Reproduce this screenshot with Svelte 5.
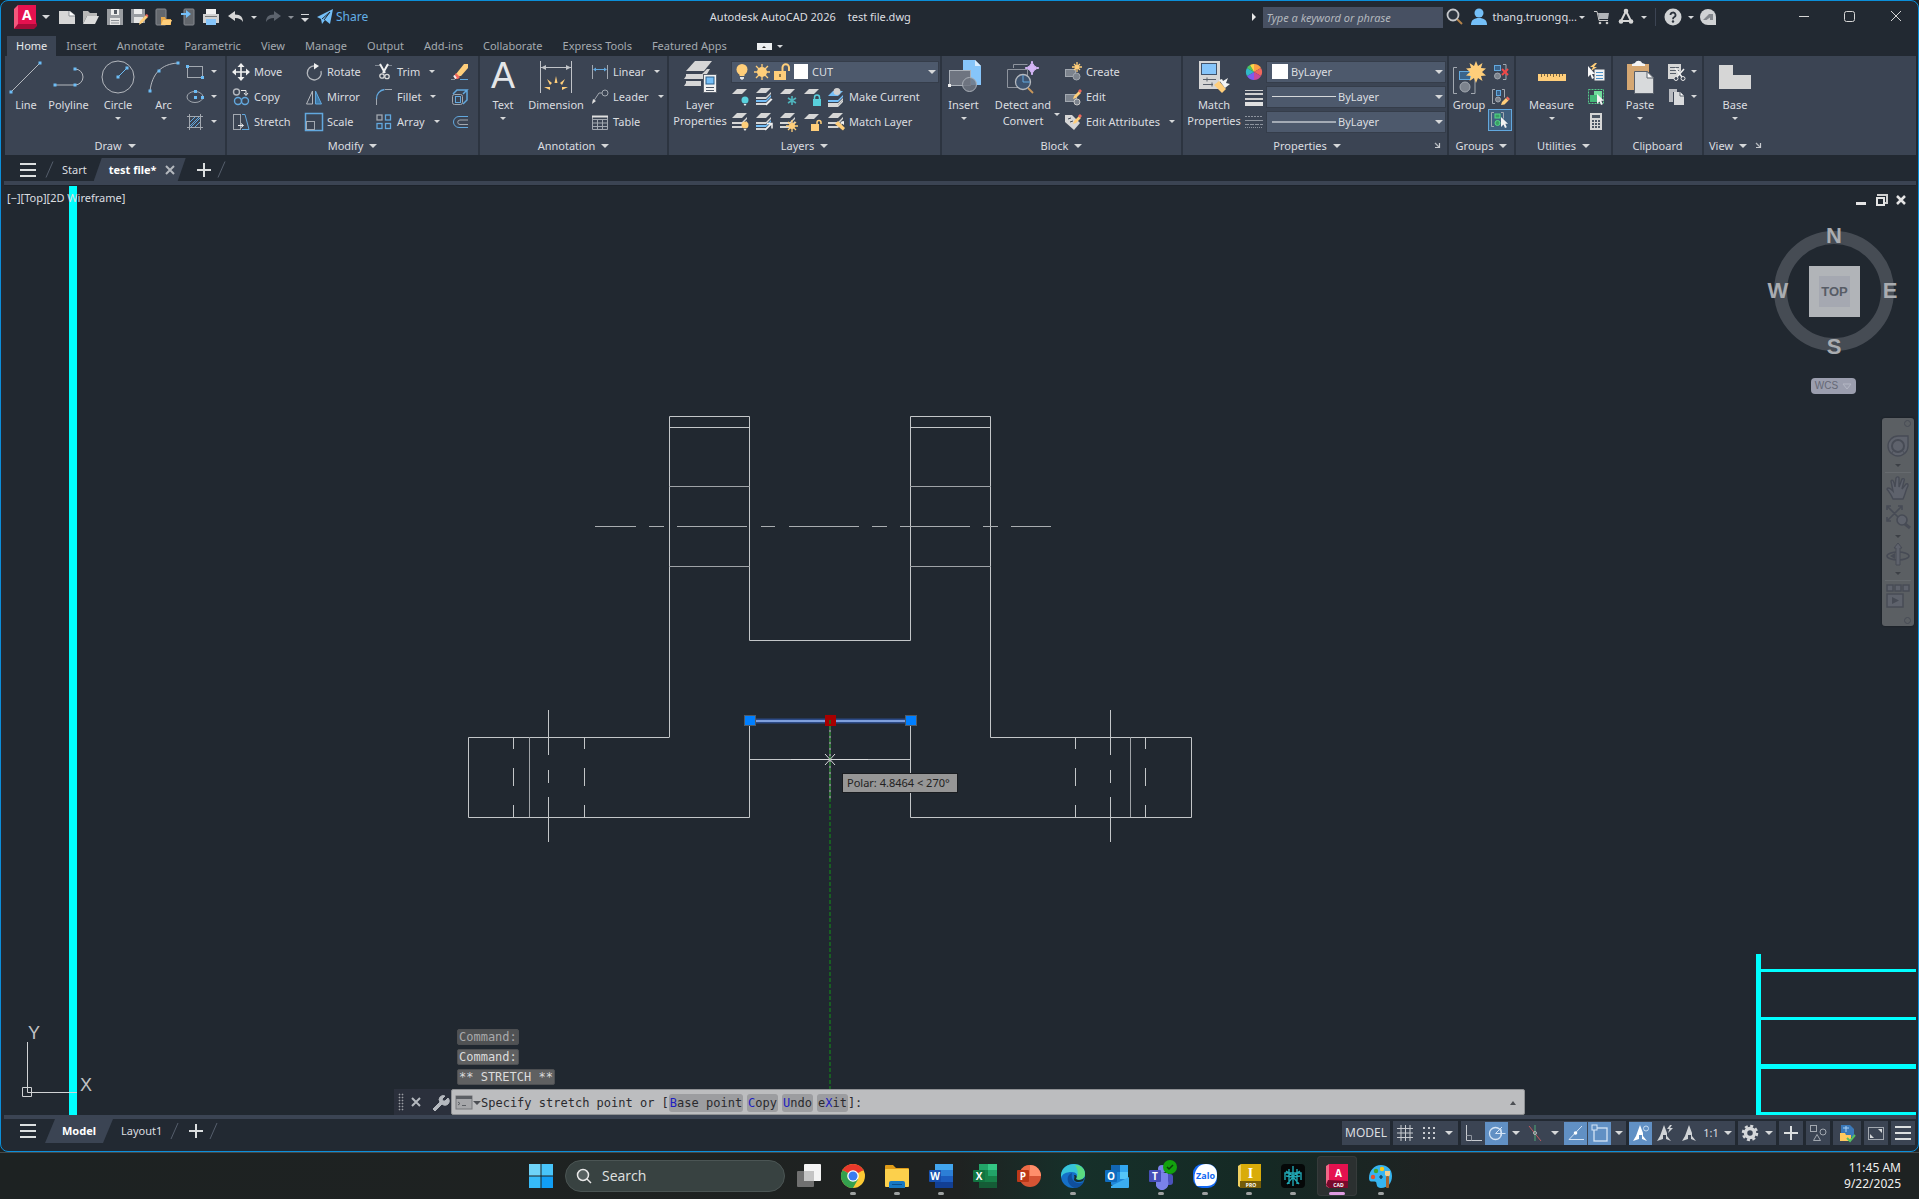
<script>
  const sheet = (y, c = '#d6d6d6') => `<path d="M6 ${y}h10l-5 5H1z" fill="${c}"/>`;
  const edge = (y, c = '#d6d6d6') => `<path d="M1 ${y}h10l5-5v2l-5 5H1z" fill="${c}"/>`;
  const pencil = '<path d="M10 8l5-5 2 2-5 5-3 1z" fill="#ffce7a"/><path d="M14 3l2-2 2 2-2 2z" fill="#f0685c"/>';
  const cursor = '<path d="M10 6v10l2.500-2.500 1.500 3.500 1.800-.8-1.500-3.400H17z" fill="#f2f2f2"/>';
  const dot = (x, y) => `<rect x="${x - 1.5}" y="${y - 1.5}" width="3" height="3" fill="#6cbcf5"/>`;
  const sun = (x, y, r, c = '#ffce7a') =>
    `<circle cx="${x}" cy="${y}" r="${r}" fill="${c}"/><path d="M${x} ${y - r - 3}v${2 * r + 6}M${x - r - 3} ${y}h${2 * r + 6}M${x - r - 1} ${y - r - 1}l${2 * r + 2} ${2 * r + 2}M${x + r + 1} ${y - r - 1}l${-2 * r - 2} ${2 * r + 2}" stroke="${c}" stroke-width="1.3"/>`;
  const star = '<path d="M25 2l2 5 4.500-3-1.500 5 5 .5-4 3.500 4 3.500-5 .5 1.500 5-4.500-3-2 5-2-5-4.500 3 1.500-5-5-.5 4-3.500-4-3.500 5-.5-1.500-5 4.500 3z" fill="#ffce7a"/>';

  const icons = {
    line: `<path d="M3 33L32 4" stroke="#b4b8be"/>${dot(3, 33)}${dot(32, 4)}`,
    polyline: `<path d="M4 26h20a8 8 0 0 0 0-16" fill="none" stroke="#b4b8be"/>${dot(4, 26)}${dot(24, 26)}${dot(24, 10)}`,
    circle: `<circle cx="18" cy="18" r="16" fill="none" stroke="#b4b8be"/><path d="M18 18l9-9" stroke="#6cbcf5"/>${dot(18, 18)}${dot(27, 9)}`,
    arc: `<path d="M4 32C6 15 15 5 32 4" fill="none" stroke="#b4b8be"/>${dot(4, 32)}${dot(13, 12)}${dot(32, 4)}`,
    rect: `<rect x="1.500" y="3.500" width="15" height="11" fill="none" stroke="#a2a8b0"/><path d="M0 2h3v3H0zM15 13h3v3h-3z" fill="#6cbcf5"/>`,
    ellipse: `<ellipse cx="9" cy="9" rx="8" ry="5.500" fill="none" stroke="#a2a8b0"/><path d="M8 8h3v3H8zM8 2h3v3H8zM15 8h3v3h-3z" fill="#6cbcf5"/>`,
    hatch: '<path d="M3.500 1v16M14.500 1v16M1 3.500h16M1 14.500h16" stroke="#a2a8b0"/><path d="M4 9l5-5M4 13l9-9M5 14l9-9M9 14l5-5" stroke="#62a8de"/>',
    move: '<path d="M9 2v14M2 9h14" stroke="#f0f0f0" stroke-width="1.600"/><path d="M9 0l3.500 4h-7zM9 18l3.500-4h-7zM0 9l4-3.500v7zM18 9l-4-3.500v7z" fill="#f0f0f0"/>',
    copy: '<circle cx="4.500" cy="4" r="3" fill="none" stroke="#b4b8be" stroke-width="1.400"/><path d="M9 2.500h5v4M12 5l2 2.500L16 5" fill="none" stroke="#e8e8e8"/><circle cx="6" cy="13" r="3.500" fill="none" stroke="#62a8de" stroke-width="1.400"/><circle cx="13" cy="13" r="3.500" fill="none" stroke="#62a8de" stroke-width="1.400"/>',
    stretch: '<rect x="1.500" y="1.500" width="7" height="15" fill="none" stroke="#a2a8b0"/><path d="M10 1.500h3l4 15h-7" fill="none" stroke="#62a8de"/><path d="M6 12.500h5M9 10.500l2.500 2-2.500 2" fill="none" stroke="#f0f0f0"/>',
    rotate: '<path d="M10 3A7 7 0 1 0 16 8" fill="none" stroke="#b4b8be" stroke-width="1.300"/><path d="M9 0l5 3-5 3.500z" fill="#f0f0f0"/>',
    mirror: '<path d="M7.500 3v13H1.500z" fill="none" stroke="#b4b8be"/><path d="M10.500 3v13h6z" fill="#3f7aa8" stroke="#62a8de"/>',
    scale: '<rect x=".5" y=".5" width="17" height="17" fill="none" stroke="#62a8de" stroke-width="1.500"/><rect x="1.500" y="8.500" width="8" height="8" fill="#3b4453" stroke="#a2a8b0"/>',
    trim: '<path d="M0 2.500h6M11 2.500h6" stroke="#7f8792"/><path d="M5 1l5 9M13 1l-5 9" stroke="#f0f0f0" stroke-width="2"/><circle cx="7" cy="13" r="2.200" fill="none" stroke="#d8d8d8" stroke-width="1.300"/><circle cx="12" cy="13.500" r="2.200" fill="none" stroke="#d8d8d8" stroke-width="1.300"/>',
    fillet: '<path d="M1.500 17v-6" stroke="#a2a8b0"/><path d="M1.500 11a9 9 0 0 1 8-9.500" fill="none" stroke="#62a8de" stroke-width="1.300"/><path d="M10 1.500h7" stroke="#a2a8b0"/>',
    array: '<g fill="none" stroke-width="1.300"><rect x="2" y="2" width="5" height="5" stroke="#a2a8b0"/><g stroke="#62a8de"><rect x="10.500" y="2" width="5" height="5"/><rect x="2" y="10.500" width="5" height="5"/><rect x="10.500" y="10.500" width="5" height="5"/></g></g>',
    erase: '<path d="M13 1h4v4l-7 8H7l-2-2z" fill="#ffce7a"/><path d="M5 10l4 4-2 2H4l-1-3z" fill="#f0685c"/><path d="M3 12.500l2 3" stroke="#f2f2f2" stroke-width="2"/><path d="M0 16.500h4" stroke="#8c939d"/><path d="M9 16.500h8" stroke="#62a8de"/>',
    explode: '<rect x="1.500" y="6.500" width="10" height="10" rx="2" fill="none" stroke="#a2a8b0"/><rect x="4.500" y="8.500" width="5" height="6" fill="none" stroke="#62a8de"/><path d="M2 6l4-4h10l-4 4M16 2v10l-4 4" fill="none" stroke="#62a8de" stroke-width="1.500"/>',
    offset: '<path d="M17 3.500H8a5.500 5.500 0 0 0 0 11h9" fill="none" stroke="#62a8de"/><path d="M17 7H9a2 2 0 0 0 0 4.500h8" fill="none" stroke="#a2a8b0"/>',
    dimension: '<path d="M2.500 2v32M33.500 2v32M3 8.500h30" stroke="#c0c3c8"/><path d="M3 8.500l5-2.500v5zM33 8.500l-5-2.500v5z" fill="#c0c3c8"/><path d="M18 17l1.500 7h-3zM9 20l5 4-2 2zM27 20l-5 4 2 2zM6 28h6v3zM30 28h-6v3z" fill="#ffce7a"/>',
    linear: '<path d="M1.500 2v14M16.500 2v14" stroke="#a2a8b0"/><path d="M3 6.500h12" stroke="#62a8de"/><path d="M2 6.500l3-2v4zM16 6.500l-3-2v4z" fill="#62a8de"/>',
    leader: '<circle cx="14" cy="5" r="3" fill="none" stroke="#a2a8b0"/><path d="M11 5H8l-6 9" fill="none" stroke="#a2a8b0"/><path d="M1 16l1-5 3 2z" fill="#e0e0e0"/>',
    table: '<path d="M1.500 3.500h15v13h-15zM1 6.500h16M1 10h16M1 13.500h16M6.500 6v10M11.500 6v10" fill="none" stroke="#a2a8b0"/><path d="M1 3.500h16" stroke="#e0e0e0" stroke-width="2"/>',
    layerprops: '<path d="M13 2h17l-8 10H4z" fill="#d6d6d6"/><path d="M4 15h16l5-5h3l-6 10H4zM4 22h15v5H4z" fill="#d6d6d6"/><path d="M4 17l-2 3h4M4 24l-2 3h4" fill="#d6d6d6"/><rect x="21.500" y="15.500" width="13" height="18" fill="#f2f2f2" stroke="#59606b"/><rect x="24" y="18" width="8" height="7" fill="#74bff8" stroke="#2b5f8a"/><path d="M24 28.500h8M24 31.500h8" stroke="#4b5563"/>',
    bulb: '<circle cx="9" cy="6.500" r="5.500" fill="#ffce7a"/><path d="M6.500 10h5v3h-5z" fill="#ffce7a"/><path d="M7 14h4v1.500L9 17l-2-1.500z" fill="#e8e8e8"/>',
    sun: sun(9, 9, 5),
    lock: '<rect x="1" y="8" width="12" height="9" fill="#ffce7a"/><path d="M9.500 8V4.500a3 3 0 0 1 6.500 0V8" fill="none" stroke="#ffce7a" stroke-width="2"/><path d="M7 11v3" stroke="#6b5b3a" stroke-width="1.500"/>',
    layoff: `${sheet(1)}<circle cx="14" cy="12" r="3.500" fill="#58d0dc"/><path d="M12.500 16h3l-1.500 2z" fill="#eee"/>`,
    layiso: `${sheet(0)}${edge(9)}${edge(12, '#74bff8')}${edge(15)}<path d="M11 17l6-6" stroke="#f0f0f0" stroke-width="1.500"/>`,
    layfrz: `${sheet(1)}<path d="M13 8v9M9 10l8 5M17 10l-8 5" stroke="#4fb4bd" stroke-width="1.600"/>`,
    laylck: `${sheet(1)}<rect x="10" y="11" width="8" height="7" fill="#58d0dc"/><path d="M11.500 11V9.500a2.500 2.500 0 0 1 5 0V11" fill="none" stroke="#58d0dc" stroke-width="1.500"/>`,
    laymcur: `${sheet(3, '#74bff8')}${edge(12, '#74bff8')}${edge(15)}${edge(17)}<circle cx="10" cy="3.500" r="3.500" fill="#d0d0d0"/>`,
    layon: `${sheet(0)}${edge(9)}${edge(13)}<circle cx="14" cy="12" r="3.500" fill="#ffce7a"/><path d="M12.500 16h3l-1.500 2z" fill="#eee"/>`,
    layuniso: `${sheet(0)}${edge(9)}${edge(12, '#74bff8')}${edge(15)}<path d="M10 17l6-6M12 10.500h5v5" stroke="#f0f0f0" stroke-width="1.500" fill="none"/>`,
    laythw: `${sheet(0)}${edge(9)}${edge(13)}${sun(13, 13, 3)}`,
    layulk: `${sheet(1)}<rect x="8" y="11" width="8" height="7" fill="#ffce7a"/><path d="M14 11V9.500a2 2 0 0 1 4 0V11" fill="none" stroke="#ffce7a" stroke-width="1.500"/>`,
    laymch: `${sheet(0)}${edge(9)}${edge(13)}<path d="M8 11l3-3 7 7-2 2.500z" fill="#ffce7a"/><path d="M13 9l4 3v-4z" fill="#f2f2f2"/>`,
    insert: '<path d="M17 1h12l6 6v19H17z" fill="#86c5fa"/><path d="M29 1v6h6" fill="#d9ecfd"/><rect x="3.500" y="11.500" width="21" height="15" fill="#6e7480" stroke="#aab0b8"/><circle cx="23.500" cy="25.500" r="7" fill="#6e7480" stroke="#aab0b8" fill-opacity=".85"/><rect x="2" y="25" width="3" height="3" fill="#eee"/>',
    detect: '<path d="M8.500 9V5.500h14M2.500 10.500h20v18h-20z" fill="none" stroke="#8e949e"/><circle cx="18" cy="23" r="7.500" fill="#3e5470" stroke="#b4b8be" stroke-width="1.300"/><path d="M18 16v7h7" fill="none" stroke="#62a8de"/><path d="M23 29l5 5" stroke="#c8975a" stroke-width="1.800"/><path d="M27 2q1 6 7 7-6 1-7 7-1-6-7-7 6-1 7-7z" fill="#d3b5f5" stroke="#d3b5f5"/>',
    create: `<rect x="1.500" y="6.500" width="10" height="7" fill="#7c838d" stroke="#a2a8b0"/><circle cx="12.500" cy="13.500" r="3.500" fill="#7c838d" stroke="#a2a8b0"/>${sun(13, 4, 2)}`,
    edit: `<rect x="1.500" y="6.500" width="11" height="7" fill="#7c838d" stroke="#a2a8b0"/><circle cx="13" cy="14" r="3" fill="#7c838d" stroke="#c8c8c8"/>${pencil}`,
    attr: `<path d="M1 2h7l8 8-6 7-9-8z" fill="#d6d6d6"/><path d="M4 6l3-1M6 9l3-1" stroke="#3b4453"/>${pencil}`,
    matchprops: '<rect x="3" y="2" width="21" height="28" fill="#d6d6d6"/><rect x="5.500" y="4.500" width="15" height="11" fill="#86c5fa" stroke="#41536b"/><path d="M7 20.500h13M7 25.500h10M11 18.500v4M16 23.500v4" stroke="#59606b"/><path d="M18 26l5-4 7 8-4 4z" fill="#ffce7a"/><path d="M23 21l3-1 1 2 5-3-2 5 4 1-5 4z" fill="#f4f4f4"/>',
    wheel: '<g transform="translate(9 9)"><path d="M0 0V-8A8 8 0 0 1 7-4z" fill="#ff9f43"/><path d="M0 0L7-4A8 8 0 0 1 7 4z" fill="#f0685c"/><path d="M0 0L7 4A8 8 0 0 1 0 8z" fill="#c8489c"/><path d="M0 0V8A8 8 0 0 1-7 4z" fill="#7c5cf0"/><path d="M0 0L-7 4A8 8 0 0 1-7-4z" fill="#30b8c8"/><path d="M0 0L-7-4A8 8 0 0 1-4-7z" fill="#4cc860"/><path d="M0 0L-4-7A8 8 0 0 1 0-8z" fill="#f8d848"/></g>',
    weights: '<path d="M0 2.500h18" stroke="#d0d0d0"/><path d="M0 6h18" stroke="#d0d0d0" stroke-width="2"/><path d="M0 11h18" stroke="#d0d0d0" stroke-width="2"/><path d="M0 16h18" stroke="#e0e0e0" stroke-width="4"/>',
    types: '<path d="M0 3.500h18" stroke="#8e949e" stroke-dasharray="2 1"/><path d="M0 7.500h18" stroke="#8e949e"/><path d="M0 11.500h18" stroke="#8e949e" stroke-dasharray="4 1"/><path d="M0 14.500h18" stroke="#8e949e" stroke-dasharray="1 1"/>',
    group: `<path d="M6 8.500H2.500v26H6M20 34.500h4v-18" fill="none" stroke="#a2a8b0"/><rect x="8.500" y="12.500" width="11" height="8" fill="#3a648c" stroke="#62a8de"/><circle cx="14" cy="28" r="5" fill="#7c838d" stroke="#a2a8b0"/>${star}`,
    ungroup: '<rect x="2.500" y="2.500" width="6" height="5" fill="#3a648c" stroke="#62a8de"/><circle cx="5.500" cy="13" r="3" fill="#7c838d" stroke="#a2a8b0"/><path d="M11 1.500h3v15h-3" fill="none" stroke="#a2a8b0"/><path d="M10 6l6 6M16 6l-6 6" stroke="#f04848" stroke-width="2"/>',
    groupedit: '<path d="M3 1.500H.5v14H3M10 1.500h2.500v8" fill="none" stroke="#a2a8b0"/><rect x="4.500" y="2.500" width="4" height="5" fill="#3a648c" stroke="#62a8de"/><circle cx="6" cy="11.500" r="2.500" fill="#7c838d" stroke="#a2a8b0"/><path d="M9 17l1-3 4-4 2.500 2.500-4 4z" fill="#ffce7a"/><path d="M14 10l1.500-1.500L18 11l-1.500 1.500z" fill="#f0685c"/>',
    groupsel: `<path d="M3 1.500H.5v14H3M10 1.500h2.500v6" fill="none" stroke="#a2a8b0"/><rect x="4" y="3" width="5" height="4" fill="#3b9e65" stroke="#55d88a"/><circle cx="6.500" cy="12" r="2.500" fill="#3b9e65" stroke="#55d88a"/>${cursor}`,
    measure: '<rect x="4" y="15" width="28" height="7" fill="#ffce7a"/><path d="M7.500 15v3M10.500 15v2M13.500 15v3M16.500 15v2M19.500 15v3M22.500 15v2M25.500 15v3M28.500 15v2" stroke="#7a6540"/>',
    qselect: '<path d="M8 0l-5 4h3l-2 4 6-4H7l3-4z" fill="#ffce7a"/><rect x="7.500" y="6.500" width="10" height="11" fill="#f0f0f0"/><path d="M9 9.500h7M9 12.500h7M9 15.500h7" stroke="#4a90c8"/><path d="M1 3v11l2.500-2.500L5 16l2-1-2-4h3z" fill="#f8f8f8"/>',
    qcalcsel: `<path d="M1.500 1.500h15v14h-15z" fill="none" stroke="#55c88a" stroke-dasharray="2 1"/><path d="M7 3h8v8H7z" fill="#6fdc9c"/><path d="M3 7h7v7H3z" fill="#45b87a"/>${cursor}`,
    calc: '<rect x="3" y="0" width="12" height="17" fill="#d6d6d6"/><rect x="5" y="2" width="8" height="3" fill="#4b5563"/><path d="M5 8h8M5 11h8M5 14h8" stroke="#4b5563" stroke-width="2" stroke-dasharray="2 1"/>',
    paste: '<path d="M5 5h22v26H5z" fill="#d5a772"/><path d="M10 7V5l3-1c1-3 6-3 7 0l3 1v2z" fill="#f4f4f4"/><path d="M12.500 12.500h13l6 6v16h-19z" fill="#d8dadc" stroke="#59606b"/><path d="M25 12.500l6.500 6.500H25z" fill="#fafafa" stroke="#59606b"/>',
    cut: '<path d="M1 1h13v7l-5 8H1z" fill="#d6d6d6"/><path d="M3 4.500h9M3 7.500h9M3 10.500h6" stroke="#59606b"/><path d="M8 5l7 9M17 6l-8 9" stroke="#f0f0f0" stroke-width="1.500"/><circle cx="9" cy="15.500" r="2" fill="#3b4453" stroke="#e8e8e8"/><circle cx="16" cy="15.500" r="2" fill="#3b4453" stroke="#e8e8e8"/>',
    copyclip: '<path d="M2 1h8v3H6v10H2z" fill="#b8bbc0"/><path d="M7 4h6l4 4v9H7z" fill="#d8dadc"/><path d="M13 4v4h4" fill="#fff" stroke="#59606b"/>',
    base: '<path d="M2 6h14v10h18v14H2z" fill="#d6d6d6"/>',

    new: '<path d="M1 3h11l5 4v9H1z" fill="#d6d6d6"/><path d="M11 3v5h6" fill="#fff" stroke="#8b8f95"/>',
    open: '<path d="M1 16V3h5l2 2h7v3H5z" fill="#b8b8b8"/><path d="M5 8h12l-4 8H1z" fill="#dcdcdc"/>',
    save: '<path d="M1 1h16v16H1z" fill="#9a9da2"/><rect x="5" y="1" width="8" height="6" fill="#eee"/><rect x="8" y="2" width="3" height="4" fill="#555b64"/><rect x="4" y="10" width="10" height="7" fill="#e4e4e4"/><path d="M5 12.500h8M5 15h8" stroke="#8b8f95"/>',
    saveas: '<path d="M1 1h14v14H1z" fill="#9a9da2"/><rect x="4" y="1" width="8" height="5" fill="#eee"/><rect x="4" y="9" width="9" height="6" fill="#e4e4e4"/><path d="M9 17l1-4 6-6 2 2-6 6z" fill="#ffce7a"/><path d="M15 7l2-1 1.500 2-1 1z" fill="#f0685c"/>',
    webopen: '<rect x="2" y="1" width="10" height="16" rx="1" fill="#63676d" stroke="#85898f"/><path d="M7 9h4l1 2h5v6H7z" fill="#e8a94c"/><path d="M9 12h9l-2 5H7z" fill="#ffce7a"/>',
    websave: '<rect x="6" y="1" width="10" height="16" rx="1" fill="#63676d" stroke="#85898f"/><path d="M3 5h5V2l5 4-5 4V7H3z" fill="#74bff8"/>',
    print: '<rect x="4" y="1" width="10" height="5" fill="#f2f2f2"/><path d="M1 6h16v9H1z" fill="#d2d2d2"/><rect x="4" y="11" width="10" height="6" fill="#86c5fa"/><path d="M3 8.500h12" stroke="#777"/>',
    undo: '<path d="M1 8l7-5v3.500c6 0 8 3 8 7.500-2-3-4-4-8-4V13z" fill="#d6d6d6"/>',
    redo: '<path d="M17 8l-7-5v3.500c-6 0-8 3-8 7.500 2-3 4-4 8-4V13z" fill="#5c636d"/>',
    share: '<path d="M1 9L17 1l-3 15-5-4-3 4-1-5z" fill="#74bff8"/><path d="M6 11l8-7-6 8" stroke="#222932" fill="none"/>',
    search: '<path d="M11 11l5 5" stroke="#b4824a" stroke-width="2"/><circle cx="7" cy="7" r="5.500" fill="#2d3540" stroke="#c4c6ca" stroke-width="1.800"/>',
    user: '<circle cx="9" cy="5" r="4.500" fill="#74bff8"/><path d="M1 17c0-5 3-7 8-7s8 2 8 7z" fill="#74bff8"/>',
    cart: '<path d="M1 3.500h3l2 9h9" fill="none" stroke="#c8c8c8"/><path d="M5 5h11l-1 6H6z" fill="#b0b3b8"/><circle cx="7" cy="15" r="1.300" fill="#c8c8c8"/><circle cx="14" cy="15" r="1.300" fill="#c8c8c8"/>',
    apps: '<path d="M9 3l5 10H4z" fill="none" stroke="#d6d6d6" stroke-width="2"/><circle cx="9" cy="3" r="2.300" fill="#d6d6d6"/><circle cx="4" cy="13.500" r="2.300" fill="#d6d6d6"/><circle cx="14" cy="13.500" r="2.300" fill="#d6d6d6"/>',
    help: '<circle cx="9" cy="9" r="8.500" fill="#d0d2d4"/><path d="M6.500 7a2.500 2.500 0 1 1 3.500 2.300c-.8.4-1 .8-1 1.900" fill="none" stroke="#2b323c" stroke-width="1.800"/><circle cx="9" cy="13.500" r="1.200" fill="#2b323c"/>',
    adsk: '<path d="M9 1a8 8 0 0 0 0 16h8V9a8 8 0 0 0-8-8z" fill="#d0d2d4"/><path d="M4 12l6-6h4v6h-3V9.500L7.500 12z" fill="#83878d"/>',
    min: '<path d="M4 8.500h10" stroke="#d6d6d6"/>',
    max: '<rect x="3.500" y="3.500" width="10" height="10" rx="2" fill="none" stroke="#d6d6d6"/>',
    close: '<path d="M4 3l10 10M14 3L4 13" stroke="#d6d6d6"/>',
    menu: '<path d="M1 3h16M1 9h16M1 15h16" stroke="#dcdfe0" stroke-width="2"/>',
    plus: '<path d="M9 2v14M2 9h14" stroke="#dcdfe0" stroke-width="2"/>',
    slash: '<path d="M5 17l7-16" stroke="#555e6c"/>',
    launcher: '<path d="M4 4l4 4" stroke="#b4b8be" stroke-width="1.200"/><path d="M4 8.500h4.500V4" fill="none" stroke="#c8cbd0" stroke-width="1.200"/>',

    grid: '<path d="M5 1v16M9.500 1v16M14 1v16M1 4.500h16M1 9h16M1 13.500h16" stroke="#c8cbd0"/>',
    snap: '<g fill="#c8cbd0"><path d="M3 3h2v2H3zM8 3h2v2H8zM13 3h2v2h-2zM3 8h2v2H3zM8 8h2v2H8zM13 8h2v2h-2zM3 13h2v2H3zM8 13h2v2H8zM13 13h2v2h-2z"/></g>',
    ortho: '<path d="M2.500 1v15.500H18" fill="none" stroke="#c8cbd0"/><path d="M2.500 11.500h5v5" fill="none" stroke="#8e949e"/>',
    polar: '<circle cx="7.500" cy="9.500" r="6" fill="none" stroke="#d5e4f5" stroke-width="1.300"/><path d="M7.500 9.500h10M7.500 9.500L14 3M13 5v7" stroke="#d5e4f5" fill="none"/>',
    iso: '<path d="M3 2l12 15" stroke="#c05a60"/><path d="M9 1v16" stroke="#4fa878"/><circle cx="9" cy="9" r="1.500" fill="none" stroke="#b4b8be"/>',
    otrack: '<path d="M15 2L2 15.500h15" fill="none" stroke="#d5e4f5"/><circle cx="8.500" cy="9" r="1.800" fill="#fff"/>',
    osnap: '<rect x="3" y="4" width="13" height="13" fill="none" stroke="#d5e4f5" stroke-width="1.300"/><rect x="1" y="1" width="5" height="5" fill="#6190c4" stroke="#d5e4f5"/>',
    annvis: '<path d="M8 1l3 8v3l4 5-5-2v-4H7v4l-6 2 3-5z" fill="#fff"/><circle cx="14" cy="4.500" r="2.500" fill="none" stroke="#c5dbf2"/>',
    annauto: '<path d="M8 1l3 8v3l4 5-5-2v-4H7v4l-6 2 3-5z" fill="#d0d3d6"/><path d="M14 1l-3 4h2.500L12 9l5-5h-3l2-3z" fill="#d0d3d6"/>',
    annscale: '<path d="M9 1l3 8v3l4 5-5-2v-4H8v4l-6 2 3-5z" fill="#d0d3d6"/>',
    gear: '<circle cx="9" cy="9" r="4.500" fill="none" stroke="#d6d8da" stroke-width="3.500"/><circle cx="9" cy="9" r="7" fill="none" stroke="#d6d8da" stroke-width="2.500" stroke-dasharray="3 2.500"/>',
    shapes: '<rect x="1.500" y="1.500" width="6" height="6" fill="none" stroke="#a2a8b0"/><circle cx="14" cy="8" r="3" fill="none" stroke="#a2a8b0"/><path d="M8 10.500l3.500 6h-7z" fill="none" stroke="#a2a8b0"/>',
    clean: '<path d="M3 1h9l4 4v8H3z" fill="#3a78b8"/><path d="M5 4h6M8 2v6" stroke="#a8d0f5" fill="none"/><path d="M2 9h5l1 2h5v6H2z" fill="#ffc95e"/><path d="M9 14l3 3 5-6" fill="none" stroke="#55c060" stroke-width="2"/>',
    fullscreen: '<rect x="1.500" y="3.500" width="15" height="12" fill="none" stroke="#a2a8b0"/><path d="M11 5h4v4zM7 14H3v-4z" fill="#d6d8da"/>',

    start: '<path d="M0 0h11.500v11.500H0z" fill="#6fd3f8"/><path d="M12.500 0H24v11.500H12.500z" fill="#48c4fa"/><path d="M0 12.500h11.500V24H0z" fill="#36baf8"/><path d="M12.500 12.500H24V24H12.500z" fill="#119ef5"/>',
    taskview: '<rect x="7" y="0" width="17" height="17" rx="1" fill="#f4f4f4"/><rect x="0" y="7" width="17" height="16" rx="1" fill="#707070"/><path d="M7 7h10v10H7z" fill="#c4c4c4"/>',
    chrome: '<circle cx="12" cy="12" r="12" fill="#fcc934"/><path d="M12 12L1.600 6A12 12 0 0 1 22.400 6z" fill="#e8382b"/><path d="M1.600 6A12 12 0 0 0 12 24l5.200-9L12 12z" fill="#34a04e"/><path d="M1.600 6h20.800" stroke="#e8382b" stroke-width="1"/><circle cx="12" cy="12" r="5.800" fill="#fff"/><circle cx="12" cy="12" r="4.500" fill="#3a7cf0"/>',
    folder: '<path d="M0 2q0-1 1-1h7l3 3h12q1 0 1 1v5H0z" fill="#e09c18"/><rect x="0" y="5" width="24" height="18" rx="1" fill="#fcd04c"/><path d="M4 24v-5q0-2 2-2h12q2 0 2 2v5z" fill="#1778c4"/><path d="M7 20.500h10" stroke="#0b4f8c"/>',
    word: '<rect x="6" y="0" width="18" height="24" rx="1" fill="#1c5cbe"/><path d="M6 0h18v6H6z" fill="#42a5ee"/><path d="M6 6h18v6H6z" fill="#2c7ed6"/><path d="M6 18h18v6H6z" fill="#123f94"/><rect x="0" y="6" width="12" height="12" rx="1" fill="#1850ae"/><text x="6" y="15.500">W</text>',
    excel: '<rect x="6" y="0" width="18" height="24" rx="1" fill="#178048"/><path d="M6 0h9v6H6z" fill="#22a468"/><path d="M15 0h9v6h-9z" fill="#34c684"/><path d="M15 6h9v6h-9z" fill="#22a468"/><path d="M6 18h18v6H6z" fill="#155c36"/><rect x="0" y="6" width="12" height="12" rx="1" fill="#127440"/><text x="6" y="15.500">X</text>',
    powerpoint: '<circle cx="13" cy="12" r="11" fill="#d65434"/><path d="M13 1a11 11 0 0 1 11 11H13z" fill="#ff8f6b"/><path d="M13 1v11H2A11 11 0 0 1 13 1z" fill="#ec6c48"/><rect x="0" y="6" width="12" height="12" rx="1" fill="#bc3818"/><text x="6" y="15.500">P</text>',
    edge: '<circle cx="12" cy="12" r="12" fill="#1570c8"/><path d="M0 11C1-3 24-4 24 10c0 5-6 7-9 5 3-4 0-7-4-7-6 0-10 2-11 6z" fill="#36c4d8"/><path d="M14 1c6 0 10 4 10 9 0 5-6 7-9 5 2-4 3-8-1-14z" fill="#5ada80"/><path d="M11 9c-7 2-5 13 3 15 4 0 7-3 9-6-6 3-14 0-12-9z" fill="#104f9c"/><path d="M15 15c2 2 7 1 9-2l-2 4c-4 2-8 1-9-1 0-2 1-3 0-5 3 0 3 2 2 4z" fill="#17302c"/>',
    outlook: '<rect x="6" y="1" width="17" height="20" rx="1" fill="#1e86d8"/><path d="M6 1h9v7H6z" fill="#1266b4"/><path d="M15 1h8v7h-8z" fill="#32a6f0"/><path d="M15 8h8v7h-8z" fill="#54c6fa"/><path d="M6 24h17q1 0 1-1V13L6 22z" fill="#3badf0"/><rect x="0" y="6" width="12" height="12" rx="1" fill="#0f6cbe"/><text x="6" y="15.500">O</text>',
    teams: '<circle cx="13" cy="5" r="4" fill="#7a82ea"/><rect x="15" y="10" width="9" height="11" rx="3" fill="#4b52bc"/><path d="M7 9h12v8a6 6 0 0 1-12 5z" fill="#7a82ea"/><rect x="0" y="6" width="12" height="12" rx="1" fill="#464eb8"/><text x="6" y="15.500">T</text><circle cx="21" cy="3" r="7" fill="#13a10e"/><path d="M18 3l2 2 4-4" fill="none" stroke="#0b3d0a" stroke-width="1.500"/>',
    zalo: '<rect x="0" y="0" width="24" height="24" rx="9" fill="#1268f2"/><path d="M4 22c-5-6-3-22 9-22 7 0 11 4 11 11s-4 11-10 11z" fill="#fff"/><text x="12.500" y="14.500" style="font-size:9px;fill:#1268f2">Zalo</text>',
    inventor: '<path d="M1 2l3-2v24l-3-2z" fill="#f0d060"/><path d="M4 0h20v17H4z" fill="#d9ac0a"/><path d="M3 17h21v7H3z" fill="#755c08"/><text x="13.500" y="13.500" style="font:bold 14px Liberation Serif,serif">I</text><text x="14" y="22.500" style="font-size:5px">PRO</text>',
    perplexity: '<rect x="0" y="0" width="24" height="24" rx="4" fill="#050808"/><path d="M12 2v20M5 7l7 5 7-5M6 20l6-7 6 7M4 16V9h16v7M8 5v15M16 5v15M5 12l7 1 7-1" fill="none" stroke="#20a8b4" stroke-width="1.400"/>',
    autocad: '<path d="M1 2l3-2v24l-3-2z" fill="#f06888"/><path d="M4 0h19v17H4z" fill="#e5114f"/><path d="M3 16l20 1v7H4l-3-3z" fill="#780a2c"/><text x="13.500" y="13">A</text><text x="13.500" y="22.500" style="font-size:5px">CAD</text>',
    paint: '<path d="M12 1C5 1 0 7 0 14c0 6 6 2 7 4s0 6 5 6c7 0 11-5 11-12S18 1 12 1z" fill="#36b4f0"/><circle cx="4" cy="13" r="2.200" fill="#e8502c"/><circle cx="7" cy="7" r="2.200" fill="#44a828"/><circle cx="13" cy="5" r="2.200" fill="#f8c818"/><path d="M10 13h4M12 11v4" stroke="#134" stroke-width="1.200"/><path d="M16 7h5v4q-2 3-5 0z" fill="#f0cf90"/><rect x="17" y="12" width="3" height="12" rx="1" fill="#a8642c"/>',

    logo: '<path d="M0 4l4-4v22l-4 2z" fill="#f4587c"/><path d="M4 0h18v19H4z" fill="#e5114f"/><path d="M4 19h18l1-2v4l-3 3H0z" fill="#a50b38"/>',
    wrench: '<path d="M2 16l7-7a4 4 0 0 1 5-6l-3 3 1 2 2 0 3-3a4 4 0 0 1-6 6l-7 7z" fill="#b4b8be" stroke="#b4b8be"/>',
    prompt: '<rect x="1" y="2" width="16" height="13" fill="#a6a7aa" stroke="#77797d"/><path d="M1 2h16v3H1z" fill="#5c5f64"/><path d="M3 8l2 1.500L3 11M7 11.500h4" fill="none" stroke="#5c5f64"/>',
    cross: '<path d="M5 5l8 8M13 5l-8 8" stroke="#b4b8be" stroke-width="2"/>',
    wmin: '<path d="M4 11h10v3H4z" fill="#e4e4e4"/>',
    wrestore: '<path d="M6 5V4h9v8h-2" fill="none" stroke="#d0d0d0" stroke-width="2"/><rect x="5" y="7" width="7" height="7" fill="none" stroke="#e4e4e4" stroke-width="2"/>',
    wclose: '<path d="M5 5l8 8M13 5l-8 8" stroke="#e4e4e4" stroke-width="2.500"/>',

    navwheel: '<path d="M12 2h10v10a10 10 0 1 1-10-10z" fill="#5e626c" stroke="#474b55" stroke-width="1.400"/><circle cx="12" cy="12" r="6" fill="#5e626c" stroke="#474b55" stroke-width="2"/><path d="M5 20l3-4M19 20l-3-4" stroke="#474b55"/>',
    navpan: '<path d="M7 23C5 18 3 16 1 13c1-2 3-1 6 2L5 5c1-2 3-1 4 6l1-9c1-2 3-1 3 0v9l3-8c2-1 3 0 2 2l-2 8 4-5c2-1 3 1 1 4-2 5-2 7-4 11z" fill="#5e626c" stroke="#474b55" stroke-width="1.400"/>',
    navzoom: '<path d="M2 2l13 13M15 2L2 15M1 5V1h4M12 1h4v4M1 12v4h4" fill="none" stroke="#474b55" stroke-width="1.600"/><circle cx="16" cy="15" r="5" fill="#5e626c" stroke="#474b55" stroke-width="1.600"/><path d="M19 19l5 4" stroke="#474b55" stroke-width="3"/>',
    navorbit: '<ellipse cx="12" cy="14" rx="11" ry="4" fill="none" stroke="#474b55" stroke-width="1.600"/><path d="M12 1l4 5h-2v17h-4V6H8z" fill="#5e626c" stroke="#474b55"/><path d="M4 14l5-3v6z" fill="#474b55"/>',
    navmotion: '<g fill="#5e626c" stroke="#474b55" stroke-width="1.400"><rect x="1" y="1" width="6" height="6"/><rect x="9" y="1" width="6" height="6"/><rect x="17" y="1" width="6" height="6"/><rect x="1" y="10" width="16" height="13"/></g><path d="M6 13l7 3.500L6 20z" fill="#474b55"/>',
  };

  const menus = ['Home', 'Insert', 'Annotate', 'Parametric', 'View', 'Manage', 'Output', 'Add-ins', 'Collaborate', 'Express Tools', 'Featured Apps'];
  const quick = [['new', 'New'], ['open', 'Open'], ['save', 'Save'], ['saveas', 'Save As'], ['webopen', 'Open from Web'], ['websave', 'Save to Web'], ['print', 'Plot']];
  const modify = [
    ['w73', [['move', 'Move'], ['copy', 'Copy'], ['stretch', 'Stretch']]],
    ['w70', [['rotate', 'Rotate'], ['mirror', 'Mirror'], ['scale', 'Scale']]],
    ['w76', [['trim', 'Trim', true], ['fillet', 'Fillet', true], ['array', 'Array', true]]],
  ];
  const layerTools = [
    ['layoff', 'layiso', 'layfrz', 'laylck', 'laymcur', 'Make Current'],
    ['layon', 'layuniso', 'laythw', 'layulk', 'laymch', 'Match Layer'],
  ];
  const apps = [
    ['taskview', 'Task View', ''], ['chrome', 'Chrome', 'run'], ['folder', 'File Explorer', 'run'], ['word', 'Word', 'run'],
    ['excel', 'Excel', ''], ['powerpoint', 'PowerPoint', ''], ['edge', 'Edge', 'run'], ['outlook', 'Outlook', ''],
    ['teams', 'Teams', 'run'], ['zalo', 'Zalo', 'run'], ['inventor', 'Inventor', 'run'], ['perplexity', 'Perplexity', 'run'],
    ['autocad', 'AutoCAD', 'run active'], ['paint', 'Paint', 'run'],
  ];
  const nav = [['navwheel', true, true], ['navpan', false, false], ['navzoom', true, false], ['navorbit', true, true], ['navmotion', false, false]];
  const holes = [{ a: 513.5, b: 584.5, mid: 548.5, solid: 529.5 }, { a: 1075.5, b: 1145.5, mid: 1110.5, solid: 1130.5 }];
</script>

{#snippet ic(name, size = 18)}
  <svg width={size} height={size} viewBox="0 0 {size} {size}" aria-hidden="true">{@html icons[name]}</svg>
{/snippet}

{#snippet tool(name, label, more = false)}
  <button class="tool">{@render ic(name)}<span>{label}</span>{#if more}<i class="caret sm"></i>{/if}</button>
{/snippet}

{#snippet mini(name, label, more = false)}
  <button class="tool" aria-label={label}>{@render ic(name)}{#if more}<i class="caret sm"></i>{/if}</button>
{/snippet}

{#snippet big(name, label, cls, more = false)}
  <button class="big {cls}">{@render ic(name, 36)}<span>{label}</span>{#if more}<i class="caret sm"></i>{/if}</button>
{/snippet}

{#snippet title(label, more = true)}
  <button class="ptitle">{label}{#if more}<i class="caret"></i>{/if}</button>
{/snippet}

<div class="screen">
  <main class="app">
    <header class="titlebar">
      <div class="quick">
        <button class="applogo" aria-label="Application menu">
          {@render ic('logo', 24)}<b>A</b>
        </button>
        <i class="caret"></i>
        <span class="files">
          {#each quick as [n, l]}<button aria-label={l}>{@render ic(n)}</button>{/each}
        </span>
        <button class="hist" aria-label="Undo">{@render ic('undo')}<i class="caret sm"></i></button>
        <button class="hist" aria-label="Redo">{@render ic('redo')}<i class="caret sm dim"></i></button>
        <button class="custom" aria-label="Customize toolbar"><i class="caret bar"></i></button>
        <button class="share">{@render ic('share')}<span>Share</span></button>
      </div>
      <h1><span>Autodesk AutoCAD 2026</span><span>test file.dwg</span></h1>
      <div class="account">
        <i class="caret right"></i>
        <input class="find" type="text" aria-label="Search help" placeholder="Type a keyword or phrase" />
        <button aria-label="Search">{@render ic('search')}</button>
        <button class="user">{@render ic('user')}<span>thang.truongq...</span><i class="caret sm"></i></button>
        <button aria-label="Store">{@render ic('cart')}</button>
        <button class="hist" aria-label="App Store">{@render ic('apps')}<i class="caret sm"></i></button>
        <i class="vline"></i>
        <button class="hist" aria-label="Help">{@render ic('help')}<i class="caret sm"></i></button>
        <button aria-label="Autodesk">{@render ic('adsk')}</button>
      </div>
      <div class="winbtns">
        <button aria-label="Minimize">{@render ic('min')}</button>
        <button aria-label="Maximize">{@render ic('max')}</button>
        <button aria-label="Close">{@render ic('close')}</button>
      </div>
    </header>

    <nav class="menus">
      {#each menus as m, i}<button class:on={i === 0}>{m}</button>{/each}
      <button class="fold" aria-label="Minimize ribbon"><i></i></button>
      <i class="caret sm"></i>
    </nav>

    <div class="ribbon">
      <section class="panel p-draw">
        <div class="body">
          {@render big('line', 'Line', 'w42')}
          {@render big('polyline', 'Polyline', 'w43')}
          {@render big('circle', 'Circle', 'w56', true)}
          {@render big('arc', 'Arc', 'w35', true)}
          <div class="col shapes">
            {@render mini('rect', 'Rectangle', true)}
            {@render mini('ellipse', 'Ellipse', true)}
            {@render mini('hatch', 'Hatch', true)}
          </div>
        </div>
        {@render title('Draw')}
      </section>
      <section class="panel p-modify">
        <div class="body lead">
          {#each modify as [w, items]}
            <div class="col {w}">{#each items as [n, l, more]}{@render tool(n, l, more)}{/each}</div>
          {/each}
          <div class="col">
            {@render mini('erase', 'Erase')}
            {@render mini('explode', 'Explode')}
            {@render mini('offset', 'Offset')}
          </div>
        </div>
        {@render title('Modify')}
      </section>
      <section class="panel p-annot">
        <div class="body">
          <button class="big w46"><b class="bigA">A</b><span>Text</span><i class="caret sm"></i></button>
          {@render big('dimension', 'Dimension', 'w60')}
          <div class="col after">
            {@render tool('linear', 'Linear', true)}
            {@render tool('leader', 'Leader', true)}
            {@render tool('table', 'Table')}
          </div>
        </div>
        {@render title('Annotation')}
      </section>
      <section class="panel p-layers">
        <div class="body">
          {@render big('layerprops', 'Layer Properties', 'w62')}
          <div class="col grow">
            <div class="row">
              <div class="combo layer">
                {@render ic('bulb')}{@render ic('sun')}{@render ic('lock')}
                <i class="swatch"></i>
                <select aria-label="Layer"><option>CUT</option></select>
                <i class="caret"></i>
              </div>
            </div>
            {#each layerTools as [a, b, c, d, e, l]}
              <div class="row licons">
                {#each [a, b, c, d] as n}<button aria-label={n}>{@render ic(n)}</button>{/each}
                {@render tool(e, l)}
              </div>
            {/each}
          </div>
        </div>
        {@render title('Layers')}
      </section>
      <section class="panel p-block">
        <div class="body">
          {@render big('insert', 'Insert', 'w43', true)}
          <button class="big w76 detect">{@render ic('detect', 36)}<span>Detect and Convert</span><i class="caret sm"></i></button>
          <div class="col after2">
            {@render tool('create', 'Create')}
            {@render tool('edit', 'Edit')}
            {@render tool('attr', 'Edit Attributes', true)}
          </div>
        </div>
        {@render title('Block')}
      </section>
      <section class="panel p-props">
        <div class="body">
          {@render big('matchprops', 'Match Properties', 'w62')}
          <div class="col grow">
            <div class="row">
              {@render ic('wheel')}
              <div class="combo"><i class="swatch"></i><select aria-label="Object color"><option>ByLayer</option></select><i class="caret"></i></div>
            </div>
            <div class="row">
              {@render ic('weights')}
              <div class="combo"><i class="rule"></i><select aria-label="Lineweight"><option>ByLayer</option></select><i class="caret"></i></div>
            </div>
            <div class="row">
              {@render ic('types')}
              <div class="combo"><i class="rule thick"></i><select aria-label="Linetype"><option>ByLayer</option></select><i class="caret"></i></div>
            </div>
          </div>
        </div>
        <div class="foot">{@render title('Properties')}<button aria-label="Properties settings">{@render ic('launcher', 14)}</button></div>
      </section>
      <section class="panel p-groups">
        <div class="body">
          {@render big('group', 'Group', 'w40')}
          <div class="col">
            {@render mini('ungroup', 'Ungroup')}
            {@render mini('groupedit', 'Group Edit')}
            <button class="tool lit" aria-label="Group Selection">{@render ic('groupsel')}</button>
          </div>
        </div>
        {@render title('Groups')}
      </section>
      <section class="panel p-utils">
        <div class="body">
          {@render big('measure', 'Measure', 'w71', true)}
          <div class="col">
            {@render mini('qselect', 'Quick Select')}
            {@render mini('qcalcsel', 'Select All')}
            {@render mini('calc', 'Calculator')}
          </div>
        </div>
        {@render title('Utilities')}
      </section>
      <section class="panel p-clip">
        <div class="body">
          {@render big('paste', 'Paste', 'w54', true)}
          <div class="col">
            {@render mini('cut', 'Cut', true)}
            {@render mini('copyclip', 'Copy Clip', true)}
          </div>
        </div>
        {@render title('Clipboard', false)}
      </section>
      <section class="panel p-view">
        <div class="body">{@render big('base', 'Base', 'w62', true)}</div>
        <div class="foot left">{@render title('View')}<button aria-label="View settings">{@render ic('launcher', 14)}</button></div>
      </section>
    </div>

    <div class="doctabs">
      <button class="burger" aria-label="File tabs menu">{@render ic('menu')}</button>
      {@render ic('slash')}
      <button class="plain">Start</button>
      <div class="tab"><button class="name">test file*</button><button class="x" aria-label="Close tab">{@render ic('cross')}</button></div>
      <button aria-label="New drawing">{@render ic('plus')}</button>
      {@render ic('slash')}
    </div>
    <div class="strip top"></div>

    <div class="canvas">
      <svg class="drawing" width="100%" height="100%" aria-label="Drawing">
        <g transform="translate(-4 -186)" fill="none" stroke="#c3c6c8">
          <rect x="69" y="186" width="8" height="2000" fill="#00ffff" stroke="none" />
          <path d="M669.500 737V416.500h80v224h161v-224h80V737.500h201v80h-281V720M749.500 720v97.500h-281v-80h201" />
          <path d="M669 427.500h81M910 427.500h81M749 759.500h162" />
          <path d="M669 486.500h81M910 486.500h81M669 566.500h81M910 566.500h81" stroke="#9fa3a7" />
          <path d="M595 526.500h41M649 526.500h15M677 526.500h70M761 526.500h14M789 526.500h70M872 526.500h15M900 526.500h70M983 526.500h15M1011 526.500h40" stroke="#a9adb0" />
          {#each holes as h}
            <path d="M{h.solid} 737v80" stroke="#9fa3a7" />
            <path d="M{h.mid} 710v45m0 15v13m0 14v45" />
            {#each [h.a, h.b] as x}<path d="M{x} 737v12m0 19v18m0 19v12" />{/each}
          {/each}
          <path d="M791 759.500h77M830 720v79" stroke="#d8dadb" />
          <path d="M750 721h161" stroke="#2c4a86" stroke-width="5" />
          <path d="M750 721h161" stroke="#7f9fdc" stroke-width="2" />
          <rect x="744.500" y="715.500" width="11" height="10" fill="#007fff" stroke="#4f5a66" />
          <rect x="905.500" y="715.500" width="11" height="10" fill="#007fff" stroke="#4f5a66" />
          <rect x="825" y="715" width="11" height="11" fill="#a60000" stroke="none" />
          <path d="M830 720V2000" stroke="#17701f" stroke-width="1.500" stroke-dasharray="4 2" />
          <path d="M825 754l10 11M835 754l-10 11" stroke="#d8dadb" />
          <path d="M27.500 1042v50.500H77M22.500 1087.500h9v9h-9z" stroke="#d0d2d4" />
          <text x="28" y="1039">Y</text>
          <text x="80" y="1091">X</text>
        </g>
      </svg>

      <div class="vlabel"><button>[−]</button><button>[Top]</button><button>[2D Wireframe]</button></div>
      <div class="vwin">
        <button aria-label="Minimize view">{@render ic('wmin')}</button>
        <button aria-label="Restore view">{@render ic('wrestore')}</button>
        <button aria-label="Close view">{@render ic('wclose')}</button>
      </div>

      <div class="cube">
        <b class="n">N</b><b class="w">W</b><button>TOP</button><b class="e">E</b><b class="s">S</b>
      </div>
      <button class="wcs">WCS<svg width="10" height="7" viewBox="0 0 10 7" aria-hidden="true"><path d="M1 1h8L5 6z" fill="none" stroke="#b4b7c4" /></svg></button>

      <div class="navbar">
        <i class="ring"></i>
        {#each nav as [n, more, sep]}
          <button aria-label={n} class:sep>{@render ic(n, 25)}{#if more}<i class="caret sm"></i>{/if}</button>
        {/each}
        <i class="ring"></i>
      </div>

      <div class="tip">Polar: 4.8464 &lt; 270°</div>

      <svg class="titleblock" width="160" height="161" viewBox="0 0 160 161" aria-hidden="true">
        <path d="M0 0h5v161H0zM5 15h155v3H5zM5 63h155v3H5zM5 110h155v5H5zM5 158h155v3H5z" fill="#00ffff" />
      </svg>

      <div class="cmd">
        <div class="history"><span class="old">Command:</span><span>Command:</span><span>** STRETCH **</span></div>
        <div class="cmdrow">
          <div class="grip">
            <i></i>
            <button aria-label="Close command line">{@render ic('cross')}</button>
            <button aria-label="Customize">{@render ic('wrench')}</button>
          </div>
          <div class="cmdline">
            <button class="recent" aria-label="Recent commands">{@render ic('prompt')}<i class="caret dark"></i></button>
            <label for="cmdin">Specify stretch point or [</label>
            <span class="opts">
              <button><em>B</em>ase point</button>
              <button><em>C</em>opy</button>
              <button><em>U</em>ndo</button>
              <button>e<em>X</em>it</button>
            </span>
            <span>]:</span>
            <input id="cmdin" type="text" />
            <button class="up" aria-label="Expand history"><i class="caret upw"></i></button>
          </div>
        </div>
      </div>
    </div>
    <div class="strip"></div>

    <footer class="bottom">
      <button class="burger" aria-label="Layout menu">{@render ic('menu')}</button>
      <button class="model">Model</button>
      <button class="plain">Layout1</button>
      {@render ic('slash')}
      <button aria-label="New layout">{@render ic('plus')}</button>
      {@render ic('slash')}
      <div class="status">
        <div class="sg"><button class="txt">MODEL</button></div>
        <div class="sg"><button aria-label="Grid">{@render ic('grid')}</button><button aria-label="Snap">{@render ic('snap')}</button><i class="caret gap"></i></div>
        <div class="sg">
          <button aria-label="Ortho">{@render ic('ortho')}</button>
          <button class="act" aria-label="Polar">{@render ic('polar')}</button><i class="caret"></i>
          <button aria-label="Isometric">{@render ic('iso')}</button><i class="caret gap"></i>
          <button class="act" aria-label="Object snap tracking">{@render ic('otrack')}</button>
          <button class="act" aria-label="Object snap">{@render ic('osnap')}</button><i class="caret"></i>
        </div>
        <div class="sg">
          <button class="act" aria-label="Annotation visibility">{@render ic('annvis')}</button>
          <button aria-label="Auto scale">{@render ic('annauto')}</button>
          <button aria-label="Annotation scale">{@render ic('annscale')}</button>
          <button class="ratio">1:1</button><i class="caret"></i>
        </div>
        <div class="sg"><button aria-label="Workspace">{@render ic('gear')}</button><i class="caret"></i></div>
        <div class="sg"><button aria-label="Annotation monitor">{@render ic('plus')}</button></div>
        <div class="sg"><button aria-label="Isolate objects">{@render ic('shapes')}</button></div>
        <div class="sg wide"><button aria-label="Graphics">{@render ic('clean')}</button></div>
        <div class="sg"><button aria-label="Clean screen">{@render ic('fullscreen')}</button></div>
        <div class="sg"><button aria-label="Customization">{@render ic('menu')}</button></div>
      </div>
    </footer>
  </main>

  <div class="taskbar">
    <div class="dock">
      <button class="cell" aria-label="Start">{@render ic('start', 24)}</button>
      <label class="wsearch">
        <svg width="16" height="16" viewBox="0 0 16 16" aria-hidden="true"><circle cx="7" cy="7" r="5.500" fill="#566060" stroke="#e8e8e8" stroke-width="1.500" /><path d="M11 11l4 4" stroke="#e8e8e8" stroke-width="1.500" /></svg>
        <input type="text" placeholder="Search" aria-label="Search" />
      </label>
      {#each apps as [n, l, state]}<button class="cell {state}" aria-label={l}>{@render ic(n, 24)}</button>{/each}
    </div>
    <div class="clock"><span>11:45 AM</span><span>9/22/2025</span></div>
  </div>
</div>

<style>
  :global(body) { background: #1e2222; }
  .screen { display: flex; flex-direction: column; height: 100vh; font: 11px/16px "Noto Sans", "Open Sans", sans-serif; color: #dcdee0; background: #1e2222; overflow: hidden; }
  .screen, .screen * { box-sizing: border-box; }
  button { font: inherit; color: inherit; background: none; border: 0; padding: 0; margin: 0; display: flex; align-items: center; white-space: nowrap; }
  svg { display: block; flex: none; overflow: visible; }
  i { display: block; flex: none; }
  .caret { width: 0; height: 0; border: 4px solid transparent; border-top-color: #d6d8da; border-bottom: 0; }
  .caret.sm { border-width: 3px; border-bottom: 0; }
  .caret.dim { border-top-color: #8a8f96; }
  .caret.dark { border-top-color: #4c4f54; }
  .caret.right { border: 4px solid transparent; border-left-color: #e8e8e8; border-right: 0; }
  .caret.upw { border: 3px solid transparent; border-bottom: 4px solid #4c4f54; border-top: 0; }

  .app { flex: 1; min-height: 0; display: flex; flex-direction: column; border: 1px solid #0b8fda; border-radius: 8px; background: #222932; padding: 0 2px 0 3px; }

  .titlebar { display: flex; align-items: center; height: 32px; padding: 0 3px 0 10px; }
  .titlebar > div { display: flex; align-items: center; }
  .applogo { position: relative; }
  .applogo b { position: absolute; left: 8px; top: 0; font-size: 14px; line-height: 20px; color: #fff; }
  .quick > .caret { margin: 0 8px 0 4px; }
  .files { display: flex; gap: 6px; }
  .hist { gap: 6px; }
  .quick .hist { margin-left: 7px; }
  .quick .hist + .hist { margin-left: 7px; }
  .custom { margin-left: 7px; }
  .bar { position: relative; margin-top: 5px; }
  .bar::before { content: ""; position: absolute; left: -4px; top: -8px; width: 8px; height: 1px; background: #d6d8da; }
  .share { gap: 2px; margin-left: 7px; color: #62b0e8; font-size: 12px; }
  h1 { flex: 1; display: flex; justify-content: center; gap: 12px; font: inherit; margin: 0; font-size: 11px; }
  .find { width: 180px; height: 21px; margin: 0 3px 0 7px; padding: 0 3px; border: 0; background: #475062; color: #dcdee0; font: italic 11px/16px "Noto Sans", "Open Sans", sans-serif; }
  .find::placeholder { color: #b4b8be; opacity: 1; }
  .user { gap: 4px; margin: 0 8px 0 6px; }
  .user .caret { margin-left: -2px; }
  .account > button + .hist { margin-left: 6px; }
  .vline { width: 1px; height: 18px; background: #3c4453; margin: 0 8px; }
  .account > .vline + .hist { margin: 0 5px 0 0; gap: 6px; }
  .winbtns { gap: 28px; margin-left: 78px; padding-right: 8px; }

  .menus { display: flex; align-items: flex-end; height: 23px; padding-left: 3px; color: #a4a9b0; }
  .menus button { height: 20px; padding: 0 10px; }
  .menus .on { background: #3b4453; color: #e8eaec; padding: 0 9px; }
  .menus .fold { width: 15px; height: 7px; padding: 0; margin: 0 5px 6px 20px; background: #eceef0; justify-content: center; }
  .fold i { border: 2px solid transparent; border-bottom-color: #333; border-top: 0; }
  .menus > .caret { margin-bottom: 8px; }

  .ribbon { display: flex; height: 99px; margin-left: 1px; background: #3b4453; }
  .panel { display: flex; flex-direction: column; flex: none; border-right: 2px solid #2c3440; }
  .p-draw { width: 222px; }
  .p-modify { width: 253px; }
  .p-annot { width: 189px; }
  .p-layers { width: 273px; }
  .p-block { width: 241px; }
  .p-props { width: 266px; }
  .p-groups { width: 67px; }
  .p-utils { width: 97px; }
  .p-clip { width: 91px; }
  .p-view { flex: 1; border-right: 0; }
  .body { display: flex; height: 81px; padding-top: 3px; }
  .lead { padding-left: 5px; }
  .col { display: flex; flex-direction: column; }
  .grow { flex: 1; min-width: 0; }
  .shapes { padding-left: 5px; }
  .shapes .tool { gap: 7px; }
  .after { padding-left: 5px; }
  .after2 { padding-left: 3px; }
  .row { display: flex; align-items: center; height: 25px; }
  .licons { gap: 6px; }
  .tool { height: 25px; gap: 4px; }
  .tool .caret { margin-left: 5px; }
  .shapes .caret, .p-clip .tool .caret { margin-left: 0; }
  .big { flex-direction: column; height: 78px; text-align: center; }
  .big span { margin-top: 2px; white-space: normal; }
  .big .caret { margin-top: 4px; }
  .detect { position: relative; }
  .detect .caret { position: absolute; right: 1px; top: 50px; }
  .bigA { height: 36px; font: 36px/34px "Liberation Sans", Arial, sans-serif; color: #e4e6e8; }
  .w35 { width: 35px; } .w40 { width: 40px; } .w42 { width: 42px; } .w43 { width: 43px; } .w46 { width: 46px; }
  .w54 { width: 54px; } .w56 { width: 56px; } .w60 { width: 60px; } .w62 { width: 62px; }
  .w70 { width: 70px; } .w71 { width: 71px; } .w73 { width: 73px; } .w76 { width: 76px; }
  .ptitle { justify-content: center; gap: 6px; height: 18px; }
  .foot { display: grid; grid-template-columns: 1fr 16px; }
  .foot.left { display: flex; gap: 5px; padding-left: 5px; }
  .combo { display: flex; align-items: center; flex: 1; min-width: 0; height: 22px; margin-right: 1px; padding: 0 2px 0 5px; background: #4d596c; border: 1px solid #353d4a; }
  .row > svg + .combo { margin-left: 3px; }
  .layer { gap: 2px; padding-left: 1px; }
  .swatch { width: 16px; height: 15px; background: #fff; margin-right: 3px; }
  .layer .swatch { width: 14px; margin: 0 2px 0 1px; }
  .rule { width: 64px; height: 1px; background: #d6d8da; margin-right: 2px; }
  .rule.thick { height: 2px; background: #a4abb5; }
  select { flex: 1; min-width: 0; appearance: none; background: none; border: 0; padding: 0; margin: 0; color: #dcdee0; font: inherit; }
  .lit { width: 24px; height: 22px; margin: 0 0 0 -1px; border: 1px solid #62a8de; background: #40607f; justify-content: center; }
  .p-groups .col { align-items: center; }
  .p-clip .tool { gap: 6px; }

  .doctabs { display: flex; align-items: flex-end; height: 26px; padding-left: 15px; flex: none; font-size: 12px; }
  .doctabs > button, .doctabs > svg { height: 23px; }
  .doctabs > svg, .bottom > svg { width: 18px; }
  .burger { margin-right: 4px; }
  .doctabs .plain { padding: 0 7px 0 3px; font-size: 11px; }
  .tab { display: flex; align-items: center; gap: 4px; height: 23px; width: 92px; margin-right: 9px; padding-left: 15px; background: #3b4453; clip-path: polygon(8px 0, 100% 0, 84px 100%, 0 100%); }
  .name { font-weight: 700; color: #fff; font-size: 11px; }
  .strip { height: 4px; background: #3b4453; flex: none; }
  .strip.top { height: 5px; border-bottom: 1px solid #1d232b; }

  .canvas { position: relative; flex: 1; min-height: 0; overflow: hidden; background: #212830; }
  .drawing { position: absolute; inset: 0; overflow: hidden; }
  .drawing text { fill: #c0c2c5; stroke: none; font: 18px "Liberation Sans", Arial, sans-serif; }
  .vlabel { position: absolute; left: 3px; top: 4px; display: flex; }
  .vwin { position: absolute; right: 6px; top: 5px; display: flex; gap: 2px; }
  .cube { position: absolute; right: 22px; top: 45px; width: 120px; height: 120px; border: 13px solid #464c54; border-radius: 50%; }
  .cube b { position: absolute; font: 700 22px/22px "Liberation Sans", Arial, sans-serif; color: #a9acb0; width: 22px; text-align: center; }
  .cube .n { left: 36px; top: -19px; }
  .cube .s { left: 36px; bottom: -20px; }
  .cube .w { left: -20px; top: 36px; }
  .cube .e { right: -20px; top: 36px; }
  .cube button { position: absolute; left: 22px; top: 22px; width: 51px; height: 51px; border: 10px solid #b1b4b8; background: #a5a8b1; color: #575c66; font: 700 13px/16px "Liberation Sans", Arial, sans-serif; justify-content: center; }
  .wcs { position: absolute; right: 60px; top: 192px; width: 45px; height: 16px; gap: 4px; border-radius: 4px; background: #9b9eae; color: #656875; font: 10px/16px "Liberation Sans", Arial, sans-serif; justify-content: center; }
  .navbar { position: absolute; right: 2px; top: 232px; width: 32px; height: 208px; padding: 2px 3px; display: flex; flex-direction: column; border-radius: 3px; background: #5b5f63; box-shadow: 0 0 2px #15191e; }
  .navbar button { flex-direction: column; padding: 3px 0 1px; }
  .navbar .sep { border-bottom: 1px solid #666a6e; padding-bottom: 5px; }
  .navbar .caret { border-top-color: #3c4046; margin-top: 5px; }
  .navbar .ring { width: 7px; height: 7px; border: 1px solid #474b55; border-radius: 50%; align-self: flex-end; margin-bottom: 4px; }
  .navbar .ring:last-child { margin: auto 0 0; }
  .tip { position: absolute; left: 838px; top: 587px; padding: 0 7px 0 4px; background: #969696; border: 1px solid #1a1d21; color: #222; line-height: 18px; }
  .titleblock { position: absolute; right: 0; bottom: 0; }

  .cmd { position: absolute; left: 390px; right: 391px; bottom: 0; font: 12px/16px "DejaVu Sans Mono", monospace; }
  .history { display: flex; flex-direction: column; align-items: flex-start; gap: 4px; margin: 0 0 4px 63px; }
  .history span { background: #5f6061; border: 1px solid #4d4f52; border-radius: 2px; padding: 0 1px; height: 16px; line-height: 14px; color: #dcdcdc; }
  .history .old { background: #505254; color: #a8a9ab; }
  .cmdrow { display: flex; height: 26px; }
  .grip { display: flex; align-items: center; gap: 3px; width: 57px; padding-left: 4px; background: #2b303c; }
  .grip i { width: 6px; height: 18px; background: radial-gradient(#9a9da2 40%, transparent 50%) 0 0 / 3px 3px; }
  .grip button + button { margin-left: 3px; }
  .cmdline { display: flex; align-items: center; flex: 1; min-width: 0; background: #bcbdbf; border: 1px solid #8e9093; border-radius: 2px; color: #2a2a2e; padding: 1px 8px 0 3px; }
  .cmdline label { white-space: pre; }
  .opts { display: flex; gap: 4px; }
  .opts button { background: #9c9da0; border-radius: 3px; padding: 0 1px; height: 18px; }
  em { font-style: normal; color: #2020c0; }
  .cmdline input { flex: 1; min-width: 0; border: 0; padding: 0; background: none; font: inherit; outline: 0; }

  .bottom { display: flex; height: 32px; padding-left: 15px; flex: none; }
  .bottom > button, .bottom > svg { height: 24px; }
  .model { width: 68px; padding-left: 17px; margin-left: 4px; background: #3b4453; color: #fff; font-weight: 700; clip-path: polygon(10px 0, 100% 0, 58px 100%, 0 100%); }
  .bottom .burger { margin-right: 4px; }
  .bottom .plain { padding: 0 4px 0 8px; }
  .bottom .plain + svg { margin-right: 3px; }
  .status { display: flex; gap: 3px; margin-left: auto; padding: 2px 1px 0 0; }
  .sg { display: flex; align-items: center; height: 24px; background: #3b4453; }
  .sg button { width: 24px; height: 23px; justify-content: center; }
  .sg .txt { width: 48px; font-size: 12px; }
  .sg .ratio { width: 20px; }
  .sg .caret { margin: 0 3px; }
  .sg .gap { margin: 0 5px 0 4px; }
  .sg .act { background: #6190c4; width: 23px; margin-right: 1px; }
  .sg.wide { padding: 0 2px; }

  .taskbar { display: grid; grid-template-columns: 1fr auto 1fr; align-items: center; height: 47px; flex: none; padding: 0 18px 0 21px; border-top: 1px solid #454949; background: linear-gradient(90deg, #1d2222, #1f2221 50%, #16302a 56%, #152924 66%, #1f2222 75%, #1e2222); }
  .dock { grid-column: 2; display: flex; align-items: center; }
  .cell { position: relative; width: 40px; height: 40px; margin: 0 2px; border-radius: 4px; justify-content: center; }
  .cell :global(text) { font: 700 10px "Open Sans", sans-serif; fill: #fff; text-anchor: middle; }
  .run::after { content: ""; position: absolute; left: 17px; bottom: 1px; width: 6px; height: 3px; border-radius: 2px; background: #9ea1a1; }
  .active { background: #2b3030; box-shadow: inset 0 0 0 1px #363b3b; }
  .active::after { left: 12px; width: 16px; background: #df9ce2; }
  .wsearch { display: flex; align-items: center; gap: 10px; width: 220px; height: 32px; margin: 0 2px; padding: 0 10px; border-radius: 16px; background: #384241; border: 1px solid #4b5554; }
  .wsearch input { flex: 1; min-width: 0; border: 0; padding: 0; background: none; color: #e8e8e8; font: 14px/20px "Open Sans", sans-serif; }
  .wsearch input::placeholder { color: #e0e2e2; opacity: 1; }
  .clock { display: flex; flex-direction: column; text-align: right; font-size: 12px; color: #f0f0f0; }
</style>
